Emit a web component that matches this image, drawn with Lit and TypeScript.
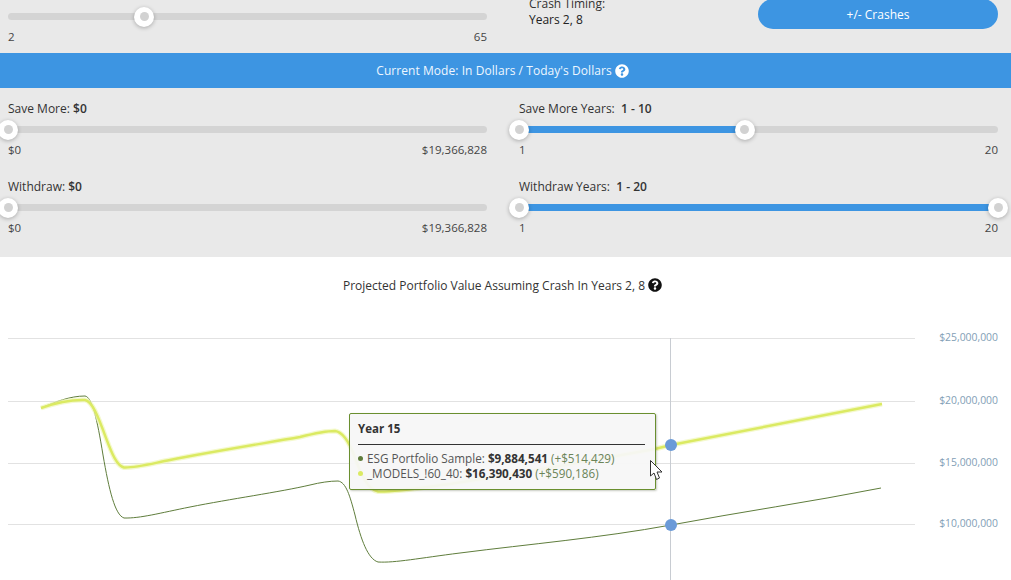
import { LitElement, html, css, svg } from "lit";
import { customElement } from "lit/decorators.js";

const QUESTION =
  "M504 256c0 136.997-111.043 248-248 248S8 392.997 8 256C8 119.083 119.043 8 256 8s248 111.083 248 248zM262.655 90c-54.497 0-89.255 22.957-116.549 63.758-3.536 5.286-2.353 12.415 2.715 16.258l34.699 26.31c5.205 3.947 12.621 3.008 16.665-2.122 17.864-22.658 30.113-35.797 57.303-35.797 20.429 0 45.698 13.148 45.698 32.958 0 14.976-12.363 22.667-32.534 33.976C247.128 238.528 216 254.941 216 296v4c0 6.627 5.373 12 12 12h56c6.627 0 12-5.373 12-12v-1.333c0-28.462 83.186-29.647 83.186-106.667 0-58.002-60.165-102-116.531-102zM256 338c-25.365 0-46 20.635-46 46 0 25.364 20.635 46 46 46s46-20.636 46-46c0-25.365-20.635-46-46-46z";

const LIGHT_LINE =
  "M41 408 C55 403 70 399.5 85 400 C92 401 98 416 106 438 C112 454 117 466 124 467.5 C135 468 150 464 170 460 C210 452 260 444 300 437 C312 434 324 431 335 431 C343 432 349 442 354 455 C361 475 368 490 378 491.5 C395 492 420 488 450 484 C520 473 590 461 655 449 L671 445 C740 431 810 418 882 404";
const DARK_LINE =
  "M41 408 C55 402 70 396 85 396 C92 397 97 418 103 455 C109 490 115 515 124 518 C140 518.5 160 513 190 507 C230 499 280 492 310 485 C320 482.5 330 481 338 481 C346 482 350 496 355 515 C361 540 368 559 378 562 C395 563 420 558 460 553 C530 544 600 538 671 525 C740 512 810 502 881 488";

const GRID = [
  { y: 338, label: "$25,000,000" },
  { y: 401, label: "$20,000,000" },
  { y: 463, label: "$15,000,000" },
  { y: 524, label: "$10,000,000" },
  { y: 586, label: "$5,000,000" },
];

@customElement("app-root")
export class AppRoot extends LitElement {
  static styles = css`
    :host {
      display: block;
      width: 1011px;
      height: 580px;
      overflow: hidden;
      font-family: "Open Sans", "Noto Sans", sans-serif;
      font-size: 12px;
      color: #333;
      background: #fff;
    }

    .top {
      height: 53px;
      background: #e9e9e9;
      display: flex;
      align-items: flex-end;
      overflow: hidden;
    }

    .columns {
      flex: 1;
      display: grid;
      grid-template-columns: 479px 479px;
      column-gap: 32px;
      padding: 0 13px 0 8px;
    }

    .top .columns {
      padding-bottom: 8px;
    }

    .crash-row {
      display: flex;
      justify-content: space-between;
      align-items: flex-end;
      padding-left: 10px;
    }

    .crash-text {
      line-height: 16px;
      padding-bottom: 17px;
    }

    .crash-text b {
      display: block;
      font-weight: 400;
      color: #222;
    }

    .crash-btn {
      width: 240px;
      height: 30px;
      margin-bottom: 16px;
      border: none;
      border-radius: 15px;
      background: #3d95e2;
      color: #fff;
      font: inherit;
      padding: 0;
    }

    .mode {
      height: 35px;
      padding-right: 6px;
      background: #3d95e2;
      color: #eef7ff;
      letter-spacing: 0.06px;
      display: flex;
      align-items: center;
      justify-content: center;
      gap: 3px;
    }

    .mode svg {
      width: 14px;
      height: 14px;
      fill: #fff;
    }

    .controls {
      height: 169px;
      background: #e9e9e9;
      box-sizing: border-box;
      padding-top: 13px;
    }

    .controls .columns {
      row-gap: 21px;
    }

    .label {
      height: 16px;
      line-height: 16px;
      margin-bottom: 9px;
      color: #333;
    }

    .label b {
      font-weight: 600;
    }

    .track {
      position: relative;
      height: 7px;
      border-radius: 4px;
      background: #d4d4d4;
    }

    .fill {
      position: absolute;
      top: 0;
      bottom: 0;
      background: #3d95e2;
    }

    .thumb {
      position: absolute;
      top: 50%;
      width: 20px;
      height: 20px;
      margin: -10px 0 0 -10px;
      border-radius: 50%;
      background: #fff;
      box-shadow: 0 1px 4px rgba(0, 0, 0, 0.28);
      display: flex;
      align-items: center;
      justify-content: center;
    }

    .thumb::after {
      content: "";
      width: 9px;
      height: 9px;
      border-radius: 50%;
      background: #d2d2d2;
    }

    .ends {
      display: flex;
      justify-content: space-between;
      font-size: 11.5px;
      line-height: 16px;
      margin-top: 9px;
      color: #444;
    }

    .chart-title {
      height: 63px;
      box-sizing: border-box;
      padding: 21px 6px 0 0;
      display: flex;
      justify-content: center;
      gap: 3px;
      line-height: 16px;
      color: #333;
    }

    .chart-title svg {
      width: 14px;
      height: 14px;
      fill: #111;
    }

    .canvas {
      position: relative;
      height: 260px;
    }

    .canvas > svg {
      position: absolute;
      inset: 0;
      display: block;
    }

    .tooltip {
      position: absolute;
      left: 349px;
      top: 93px;
      width: 307px;
      height: 77px;
      box-sizing: border-box;
      padding: 7px 10px 0 8px;
      background: rgba(247, 247, 247, 0.94);
      border: 1px solid #6a8f2f;
      border-radius: 2px;
      box-shadow: 1px 1px 2px rgba(70, 80, 50, 0.3);
      font-size: 11.7px;
      line-height: 15px;
      color: #555;
    }

    .tip-title {
      font-size: 11.5px;
      font-weight: 700;
      color: #333;
      padding: 0 0 8px 0;
      border-bottom: 1px solid #333;
      margin-bottom: 6px;
    }

    .tip-row {
      white-space: nowrap;
    }

    .tip-row b {
      color: #333;
    }

    .tip-row i {
      font-style: normal;
      color: #6b8458;
    }

    .dot {
      display: inline-block;
      width: 5px;
      height: 5px;
      border-radius: 50%;
      margin-right: 4px;
      vertical-align: 2px;
    }
  `;

  slider(label: unknown, min: string, max: string, from: number, to: number | null) {
    return html`
      <div>
        <div class="label">${label}</div>
        <div class="track">
          ${to !== null
            ? html`<div class="fill" style="left:${from}%;width:${to - from}%"></div>
                <div class="thumb" style="left:${to}%"></div>`
            : null}
          <div class="thumb" style="left:${from}%"></div>
        </div>
        <div class="ends"><span>${min}</span><span>${max}</span></div>
      </div>
    `;
  }

  questionIcon() {
    return html`<svg viewBox="0 0 512 512"><path d=${QUESTION}></path></svg>`;
  }

  chart() {
    return html`
      <svg width="1011" height="260" viewBox="0 320 1011 260">
        ${GRID.map(
          g => svg`
            <line x1="8" x2="915" y1=${g.y + 0.5} y2=${g.y + 0.5} stroke="#e2e2e2" stroke-width="1"></line>
            <text x="998" y=${g.y + 3} text-anchor="end" font-size="10.4" fill="#83a0b6">${g.label}</text>
          `
        )}
        <line x1="670.5" x2="670.5" y1="338" y2="580" stroke="#c8ccd2" stroke-width="1"></line>
        <path d=${DARK_LINE} fill="none" stroke="#5f7d3c" stroke-width="1"></path>
        <path d=${LIGHT_LINE} fill="none" stroke="#f0f6b8" stroke-width="5" opacity="0.7"></path>
        <path d=${LIGHT_LINE} fill="none" stroke="#dbea62" stroke-width="2.4"></path>
        <circle cx="671" cy="445" r="6" fill="#6a9ad8"></circle>
        <circle cx="671" cy="525" r="6" fill="#6a9ad8"></circle>
      </svg>
      <div class="tooltip">
        <div class="tip-title">Year 15</div>
        <div class="tip-row">
          <span class="dot" style="background:#5f7d3c"></span>ESG Portfolio Sample:
          <b>$9,884,541</b> <i>(+$514,429)</i>
        </div>
        <div class="tip-row">
          <span class="dot" style="background:#dbea62"></span>_MODELS_!60_40:
          <b>$16,390,430</b> <i>(+$590,186)</i>
        </div>
      </div>
      <svg width="1011" height="260" viewBox="0 320 1011 260">
        <path
          d="M650.5 460.5 V476 L654 473 L656.5 479.5 L659.5 478 L657 472 L662 472 Z"
          fill="#fff"
          stroke="#333"
          stroke-width="1"
        ></path>
      </svg>
    `;
  }

  render() {
    return html`
      <div class="top">
        <div class="columns">
          ${this.slider("", "2", "65", 28.4, null)}
          <div class="crash-row">
            <div class="crash-text">Crash Timing:<b>Years 2, 8</b></div>
            <button class="crash-btn">+/- Crashes</button>
          </div>
        </div>
      </div>
      <div class="mode">Current Mode: In Dollars / Today's Dollars ${this.questionIcon()}</div>
      <div class="controls">
        <div class="columns">
          ${this.slider(html`Save More: <b>$0</b>`, "$0", "$19,366,828", 0, null)}
          ${this.slider(html`Save More Years:&nbsp; <b>1 - 10</b>`, "1", "20", 0, 47.1)}
          ${this.slider(html`Withdraw: <b>$0</b>`, "$0", "$19,366,828", 0, null)}
          ${this.slider(html`Withdraw Years:&nbsp; <b>1 - 20</b>`, "1", "20", 0, 100)}
        </div>
      </div>
      <div class="chart-title">Projected Portfolio Value Assuming Crash In Years 2, 8 ${this.questionIcon()}</div>
      <div class="canvas">${this.chart()}</div>
    `;
  }
}
